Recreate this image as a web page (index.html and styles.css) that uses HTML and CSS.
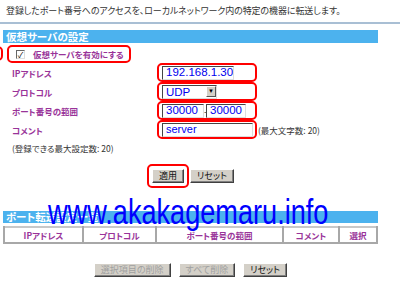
FILE: index.html
```html
<!DOCTYPE html>
<html lang="ja">
  <head>
    <meta charset="UTF-8" />
    <title>仮想サーバの設定</title>
    <link rel="stylesheet" href="styles.css">
  </head>
  <body>
    <p class="intro">登録したポート番号へのアクセスを、ローカルネットワーク内の特定の機器に転送します。</p>
    <div class="rule"></div>

    <div class="panel">
      <h2 class="bar">仮想サーバの設定</h2>

      <label class="enable mark">
        <span class="check">&#10003;</span>
        <span class="label-text">仮想サーバを有効にする</span>
      </label>
      <span class="edge-mark"></span>

      <div class="fields">
        <span class="label-text">IPアドレス</span>
        <div class="mark"><span class="input ip">192.168.1.30</span></div>

        <span class="label-text">プロトコル</span>
        <div class="mark">
          <span class="select">
            <span class="select-value">UDP</span>
            <span class="select-arrow">&#9660;</span>
          </span>
        </div>

        <span class="label-text">ポート番号の範囲</span>
        <div class="mark port">
          <span class="input port-from">30000</span><span class="dash">-</span><span class="input port-to">30000</span>
        </div>

        <span class="label-text">コメント</span>
        <div class="row-comment">
          <div class="mark"><span class="input comment">server</span></div>
          <span class="hint">(最大文字数: 20)</span>
        </div>
      </div>

      <p class="hint limit">(登録できる最大設定数: 20)</p>

      <div class="actions">
        <span class="mark button-mark"><button class="btn">適用</button></span>
        <button class="btn">リセット</button>
      </div>

      <h2 class="bar bar-small">ポート転送設定一覧</h2>
      <table class="list">
        <tr>
          <th class="c1">IPアドレス</th>
          <th class="c2">プロトコル</th>
          <th class="c3">ポート番号の範囲</th>
          <th class="c4">コメント</th>
          <th class="c5">選択</th>
        </tr>
      </table>

      <div class="actions bottom">
        <button class="btn" disabled>選択項目の削除</button>
        <button class="btn" disabled>すべて削除</button>
        <button class="btn">リセット</button>
      </div>
    </div>

    <div class="watermark">www.akakagemaru.info</div>
  </body>
</html>
```

FILE: styles.css
```css
* {
  margin: 0;
  padding: 0;
  box-sizing: border-box;
}
body {
  position: relative;
  width: 400px;
  height: 282px;
  overflow: hidden;
  background: #fff;
  font-family: "Noto Sans CJK JP", sans-serif;
  font-feature-settings: "palt";
  color: #222;
}
.intro {
  height: 22px;
  line-height: 22px;
  padding-left: 6px;
  font-size: 9px;
  letter-spacing: -0.1px;
  color: #333;
  white-space: nowrap;
}
.rule {
  height: 2px;
  background: #a9bfd4;
}
.panel {
  position: relative;
  width: 375px;
  margin-left: 3px;
  margin-top: 6px;
}
.bar {
  height: 13px;
  line-height: 13px;
  padding-left: 3px;
  background: #4cb2ee;
  color: #fff;
  font-size: 10.5px;
  font-weight: bold;
}
.bar-small {
  margin-top: 23px;
  height: 12px;
  line-height: 12px;
}
.mark {
  border: 2.5px solid #f00;
  border-radius: 5px;
}
.enable {
  display: flex;
  align-items: center;
  gap: 8px;
  width: 124px;
  height: 18px;
  margin: 2px 0 0 4px;
  padding-left: 7px;
  white-space: nowrap;
}
.check {
  display: inline-block;
  flex: none;
  width: 9px;
  height: 9px;
  border: 1px solid #666;
  border-color: #666 #ddd #ddd #666;
  background: #fff;
  font-size: 8px;
  line-height: 7px;
  text-align: center;
  color: #000;
}
.edge-mark {
  position: absolute;
  left: -10px;
  top: 16px;
  width: 10px;
  height: 15px;
  border: 2.5px solid #f00;
  border-radius: 5px;
}
.label-text {
  color: #993399;
  font-size: 8.5px;
  font-weight: bold;
  white-space: nowrap;
}
.fields {
  display: grid;
  grid-template-columns: 145px auto;
  grid-auto-rows: 19px;
  align-items: center;
  padding-left: 9px;
}
.fields > .mark,
.row-comment > .mark {
  width: 100px;
  height: 19px;
  display: flex;
  align-items: center;
  padding-left: 3px;
}
.row-comment {
  display: flex;
  align-items: center;
  gap: 1px;
}
.input {
  display: inline-block;
  height: 14px;
  line-height: 11px;
  border: 1.5px solid #888;
  border-color: #444 #ddd #ddd #444;
  background: #fff;
  color: #0000ee;
  font-family: "Liberation Sans", Arial, sans-serif;
  font-size: 11.5px;
  padding-left: 3px;
  white-space: nowrap;
  overflow: hidden;
}
.ip {
  width: 72px;
}
.port-from {
  width: 42px;
}
.port-to {
  width: 40px;
}
.dash {
  width: 2px;
  font-size: 10px;
  color: #333;
  overflow: hidden;
}
.comment {
  width: 91px;
  font-size: 11px;
}
.select {
  display: flex;
  align-items: center;
  justify-content: space-between;
  width: 55px;
  height: 14px;
  border: 1.5px solid #888;
  border-color: #444 #ddd #ddd #444;
  background: #fff;
  color: #0000ee;
  font-family: "Liberation Sans", Arial, sans-serif;
  font-size: 11.5px;
  padding-left: 3px;
}
.select-arrow {
  width: 10px;
  height: 11px;
  background: #d4d0c8;
  border: 1px solid #fff;
  border-right-color: #555;
  border-bottom-color: #555;
  color: #000;
  font-size: 6px;
  line-height: 9px;
  text-align: center;
}
.hint {
  font-size: 8.5px;
  color: #333;
  white-space: nowrap;
}
.limit {
  height: 18px;
  line-height: 18px;
  padding-left: 9px;
}
.actions {
  display: flex;
  justify-content: center;
  align-items: center;
  gap: 1px;
  margin-top: 7px;
}
.button-mark {
  display: flex;
  align-items: center;
  justify-content: center;
  width: 42px;
  height: 24px;
}
.btn {
  height: 14px;
  padding: 0 6px;
  background: #d4d0c8;
  border: 1px solid;
  border-color: #fff #404040 #404040 #fff;
  box-shadow: inset -1px -1px #808080;
  font-family: "Noto Sans CJK JP", sans-serif;
  font-feature-settings: "palt";
  font-size: 9px;
  line-height: 12px;
  color: #111;
}
.btn:disabled {
  color: #a0a0a0;
}
.list {
  margin-top: 3px;
  width: 375px;
  border-collapse: collapse;
  border: 2px solid #a8a8a8;
  border-top-color: #c8c8c8;
}
.list th {
  height: 16px;
  border-left: 2px solid #a8a8a8;
  color: #993399;
  font-size: 8.5px;
  font-weight: bold;
  text-align: center;
  padding: 0;
  white-space: nowrap;
}
.c1 { width: 79px; }
.c2 { width: 73px; }
.c3 { width: 127px; }
.c4 { width: 56px; }
.bottom {
  margin-top: 19px;
  gap: 8px;
}
.watermark {
  position: absolute;
  left: 48px;
  top: 192px;
  font-family: "Liberation Sans", Arial, sans-serif;
  font-size: 35px;
  color: #0000ff;
  white-space: nowrap;
  transform: scaleX(0.775);
  transform-origin: left top;
}
```
